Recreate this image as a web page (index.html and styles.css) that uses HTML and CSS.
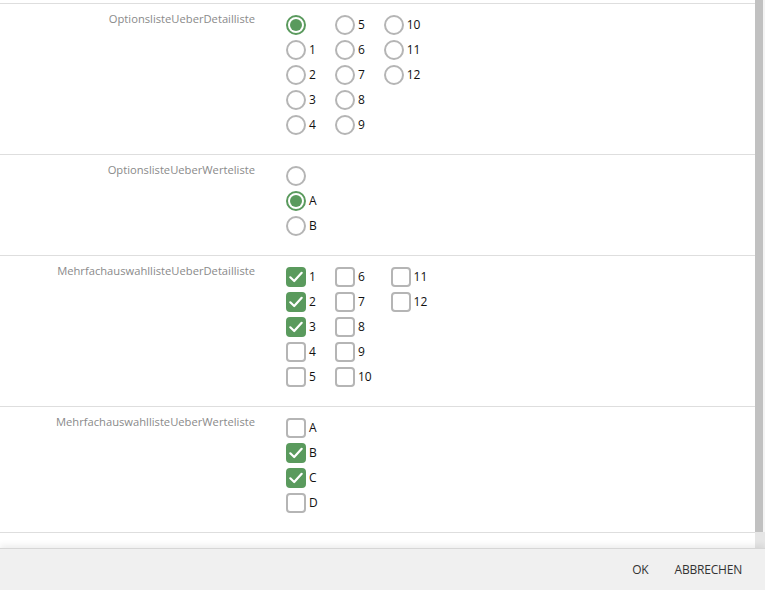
FILE: index.html
```html
<!DOCTYPE html>
<html lang="de">
<head>
<meta charset="utf-8">
<title>Formular</title>
<link rel="stylesheet" href="styles.css">
</head>
<body>
<div class="dialog">
  <div class="body">
    <div class="scroll">
      <div class="form">
        <div class="field-top"></div>

        <div class="field">
          <div class="label">OptionslisteUeberDetailliste</div>
          <div class="controls grid">
            <div class="opt"><span class="radio checked"></span><span class="txt"></span></div>
            <div class="opt"><span class="radio"></span><span class="txt">1</span></div>
            <div class="opt"><span class="radio"></span><span class="txt">2</span></div>
            <div class="opt"><span class="radio"></span><span class="txt">3</span></div>
            <div class="opt"><span class="radio"></span><span class="txt">4</span></div>
            <div class="opt"><span class="radio"></span><span class="txt">5</span></div>
            <div class="opt"><span class="radio"></span><span class="txt">6</span></div>
            <div class="opt"><span class="radio"></span><span class="txt">7</span></div>
            <div class="opt"><span class="radio"></span><span class="txt">8</span></div>
            <div class="opt"><span class="radio"></span><span class="txt">9</span></div>
            <div class="opt"><span class="radio"></span><span class="txt">10</span></div>
            <div class="opt"><span class="radio"></span><span class="txt">11</span></div>
            <div class="opt"><span class="radio"></span><span class="txt">12</span></div>
          </div>
        </div>

        <div class="field">
          <div class="label">OptionslisteUeberWerteliste</div>
          <div class="controls list">
            <div class="opt"><span class="radio"></span><span class="txt"></span></div>
            <div class="opt"><span class="radio checked"></span><span class="txt">A</span></div>
            <div class="opt"><span class="radio"></span><span class="txt">B</span></div>
          </div>
        </div>

        <div class="field">
          <div class="label">MehrfachauswahllisteUeberDetailliste</div>
          <div class="controls grid">
            <div class="opt"><span class="check checked"><svg viewBox="0 0 20 20"><path d="M4.3 10.3 L8.2 14 L15.7 5.8"/></svg></span><span class="txt">1</span></div>
            <div class="opt"><span class="check checked"><svg viewBox="0 0 20 20"><path d="M4.3 10.3 L8.2 14 L15.7 5.8"/></svg></span><span class="txt">2</span></div>
            <div class="opt"><span class="check checked"><svg viewBox="0 0 20 20"><path d="M4.3 10.3 L8.2 14 L15.7 5.8"/></svg></span><span class="txt">3</span></div>
            <div class="opt"><span class="check"></span><span class="txt">4</span></div>
            <div class="opt"><span class="check"></span><span class="txt">5</span></div>
            <div class="opt"><span class="check"></span><span class="txt">6</span></div>
            <div class="opt"><span class="check"></span><span class="txt">7</span></div>
            <div class="opt"><span class="check"></span><span class="txt">8</span></div>
            <div class="opt"><span class="check"></span><span class="txt">9</span></div>
            <div class="opt"><span class="check"></span><span class="txt">10</span></div>
            <div class="opt"><span class="check"></span><span class="txt">11</span></div>
            <div class="opt"><span class="check"></span><span class="txt">12</span></div>
          </div>
        </div>

        <div class="field">
          <div class="label">MehrfachauswahllisteUeberWerteliste</div>
          <div class="controls list">
            <div class="opt"><span class="check"></span><span class="txt">A</span></div>
            <div class="opt"><span class="check checked"><svg viewBox="0 0 20 20"><path d="M4.3 10.3 L8.2 14 L15.7 5.8"/></svg></span><span class="txt">B</span></div>
            <div class="opt"><span class="check checked"><svg viewBox="0 0 20 20"><path d="M4.3 10.3 L8.2 14 L15.7 5.8"/></svg></span><span class="txt">C</span></div>
            <div class="opt"><span class="check"></span><span class="txt">D</span></div>
          </div>
        </div>
      </div>
    </div>
    <div class="scrollbar"><div class="thumb"></div></div>
  </div>
  <div class="footer">
    <button class="btn">OK</button>
    <button class="btn">ABBRECHEN</button>
  </div>
</div>
</body>
</html>
```

FILE: styles.css
```css
html, body {
  margin: 0;
  padding: 0;
  background: #ffffff;
}

body {
  font-family: "Open Sans", "Noto Sans", sans-serif;
  width: 765px;
  height: 590px;
  overflow: hidden;
}

.dialog {
  display: flex;
  flex-direction: column;
  height: 590px;
}

.body {
  flex: 1;
  display: flex;
  min-height: 0;
}

.scroll {
  flex: 1;
  overflow: hidden;
  background: #ffffff;
}

.form {
  display: flex;
  flex-direction: column;
}

.field-top {
  height: 3px;
  border-bottom: 1px solid #dedede;
}

.field {
  display: flex;
  border-bottom: 1px solid #dedede;
  padding-bottom: 14px;
}

.label {
  width: 255px;
  text-align: right;
  font-size: 11.2px;
  line-height: 16px;
  color: #8a8a8a;
  padding-top: 7px;
  flex-shrink: 0;
}

.controls {
  margin-left: 31px;
  padding-top: 11px;
}

.controls.grid {
  display: grid;
  grid-auto-flow: column;
  grid-template-rows: repeat(5, 25px);
  justify-content: start;
  column-gap: 19px;
}

.controls.list {
  display: flex;
  flex-direction: column;
}

.opt {
  display: flex;
  align-items: flex-start;
  height: 25px;
  gap: 3px;
}

.txt {
  font-size: 12px;
  line-height: 20px;
  color: #111111;
}

.radio {
  width: 20px;
  height: 20px;
  box-sizing: border-box;
  border: 2px solid #b5b5b5;
  border-radius: 50%;
  display: flex;
  align-items: center;
  justify-content: center;
  flex-shrink: 0;
}

.radio.checked {
  border-color: #5a9a5d;
}

.radio.checked::after {
  content: "";
  width: 12px;
  height: 12px;
  border-radius: 50%;
  background: #5a9a5d;
}

.check {
  width: 20px;
  height: 20px;
  box-sizing: border-box;
  border: 2px solid #b5b5b5;
  border-radius: 4px;
  flex-shrink: 0;
  display: block;
}

.check.checked {
  background: #5a9a5d;
  border-color: #5a9a5d;
}

.check svg {
  display: block;
  width: 20px;
  height: 20px;
  margin: -2px;
}

.check svg path {
  fill: none;
  stroke: #ffffff;
  stroke-width: 2.2;
  stroke-linecap: round;
  stroke-linejoin: round;
}

.scrollbar {
  width: 10px;
  display: flex;
  flex-direction: column;
  background: #e6e6e6;
}

.thumb {
  width: 8px;
  height: 532px;
  background: #c1c1c1;
  border-right: 2px solid #f4f4f4;
}

.footer {
  height: 41px;
  flex-shrink: 0;
  background: #f0f0f0;
  border-top: 1px solid #d6d6d6;
  box-shadow: 0 -3px 6px rgba(0, 0, 0, 0.07);
  display: flex;
  justify-content: flex-end;
  align-items: center;
  padding-right: 11px;
  position: relative;
}

.btn {
  font-family: "Open Sans", "Noto Sans", sans-serif;
  font-size: 12px;
  color: #333333;
  background: transparent;
  border: none;
  padding: 4px 12px;
  margin: 0 0 0 2px;
  letter-spacing: -0.2px;
}
```
